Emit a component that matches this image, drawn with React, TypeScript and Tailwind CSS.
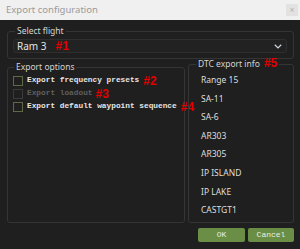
import React from 'react';

const sans = { fontFamily: '"Noto Sans", "Liberation Sans", sans-serif' };

const dtcItems = ['Range 15', 'SA-11', 'SA-6', 'AR303', 'AR305', 'IP ISLAND', 'IP LAKE', 'CASTGT1'];

const Tag: React.FC<{ n: number; className?: string }> = ({ n, className }) => (
  <span className={`font-['Liberation_Sans',sans-serif] text-[12px] font-bold leading-none text-[#e00000] ${className ?? ''}`}>
    #{n}
  </span>
);

const CheckRow: React.FC<{ label: string; n: number; disabled?: boolean; tagGap: string }> = ({
  label,
  n,
  disabled,
  tagGap,
}) => (
  <div className="flex h-[13px] items-center whitespace-nowrap">
    <span
      className={`h-[10px] w-[10px] shrink-0 border ${disabled ? 'border-[#3a3a3a]' : 'border-[#5d6a45]'}`}
    />
    <span
      className={`ml-[4px] font-['Liberation_Mono',monospace] text-[7.8px] font-bold ${
        disabled ? 'text-[#5f5f5f]' : 'text-[#e6e6e6]'
      }`}
    >
      {label}
    </span>
    <Tag n={n} className={tagGap} />
  </div>
);

const App: React.FC = () => {
  return (
    <div className="flex h-[249px] w-[300px] flex-col overflow-hidden bg-[#1f1f1f]" style={sans}>
      {/* title bar */}
      <div className="flex h-[20px] shrink-0 items-center justify-between bg-[#f0f0f0] pl-[6px] pr-[2px]">
        <span className="text-[9.5px] text-[#9a9a9a]">Export configuration</span>
        <span className="flex h-[12px] w-[12px] items-center justify-center bg-[#e2e2e2] text-[8px] leading-none text-[#b0b0b0]">
          ×
        </span>
      </div>

      <div className="flex flex-1 flex-col px-[7px] pr-[6px] pt-[4px]">
        {/* select flight */}
        <fieldset className="rounded-[3px] border border-[#353535] pb-[5px] pl-[5px] pr-[6px] pt-[1px]">
          <legend className="ml-[2px] whitespace-nowrap px-[2px] text-[8.5px] leading-[14px] text-[#d4d4d4]">
            Select flight
          </legend>
          <div className="flex h-[14px] items-center justify-between rounded-[3px] border border-[#2f2f2f] bg-[#222222] pl-[3px] pr-[4px]">
            <div className="flex items-center">
              <span className="text-[10px] text-[#e4e4e4]">Ram 3</span>
              <Tag n={1} className="ml-[9px]" />
            </div>
            <svg width="8" height="5" viewBox="0 0 8 5" fill="none">
              <path d="M0.8 0.8 L4 3.9 L7.2 0.8" stroke="#cfd6dc" strokeWidth="1.2" />
            </svg>
          </div>
        </fieldset>

        <div className="-mt-[3px] flex h-[167px] gap-[3px]">
          {/* export options */}
          <fieldset className="mt-[4px] w-[178px] min-w-0 shrink-0 rounded-[3px] border border-[#353535] pl-[5px]">
            <legend className="ml-[1px] whitespace-nowrap px-[2px] text-[8.5px] leading-[14px] text-[#d4d4d4]">
              Export options
            </legend>
            <CheckRow label="Export frequency presets" n={2} tagGap="ml-[4px]" />
            <CheckRow label="Export loadout" n={3} disabled tagGap="ml-[3px]" />
            <CheckRow label="Export default waypoint sequence" n={4} tagGap="ml-[4px]" />
          </fieldset>

          {/* DTC export info */}
          <fieldset className="mt-[1px] min-w-0 flex-1 rounded-[3px] border border-[#353535] pl-[12px]">
            <legend className="ml-[-5px] whitespace-nowrap px-[2px] text-[8.5px] leading-[14px] text-[#d4d4d4]">
              DTC export info
              <Tag n={5} className="ml-[4px]" />
            </legend>
            {dtcItems.map((item) => (
              <div key={item} className="text-[8.5px] leading-[18.6px] text-[#dedede]">
                {item}
              </div>
            ))}
          </fieldset>
        </div>

        <div className="mt-[5px] flex justify-end gap-[3px]">
          <button className="h-[14px] w-[47px] rounded-[2px] bg-[#6a8e45] font-['Liberation_Mono',monospace] text-[8px] leading-none text-[#e8eee0]">
            OK
          </button>
          <button className="h-[14px] w-[46px] rounded-[2px] bg-[#6a8e45] font-['Liberation_Mono',monospace] text-[8px] leading-none text-[#e8eee0]">
            Cancel
          </button>
        </div>
      </div>
    </div>
  );
};

export default App;
